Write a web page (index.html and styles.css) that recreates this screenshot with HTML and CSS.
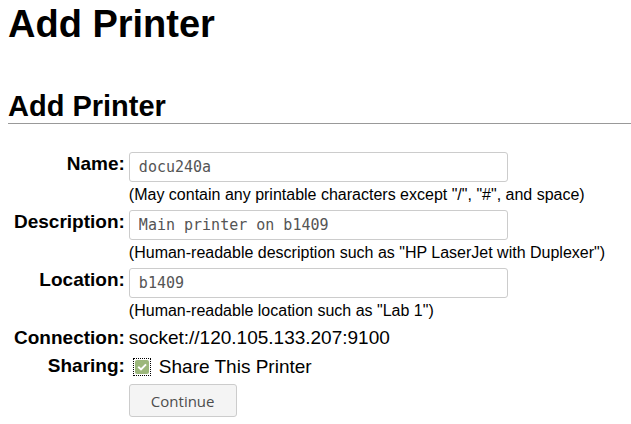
FILE: index.html
```html
<!DOCTYPE html>
<html lang="en">
<head>
<meta charset="utf-8">
<title>Add Printer</title>
<link rel="stylesheet" href="styles.css">
</head>
<body>
<h1 class="page-title">Add Printer</h1>
<h2 class="section-title">Add Printer</h2>
<form class="form">
  <label class="label" for="name">Name:</label>
  <div class="field">
    <input class="input" id="name" type="text" value="docu240a" spellcheck="false">
    <span class="hint">(May contain any printable characters except "/", "#", and space)</span>
  </div>
  <label class="label" for="description">Description:</label>
  <div class="field">
    <input class="input" id="description" type="text" value="Main printer on b1409" spellcheck="false">
    <span class="hint">(Human-readable description such as "HP LaserJet with Duplexer")</span>
  </div>
  <label class="label" for="location">Location:</label>
  <div class="field">
    <input class="input" id="location" type="text" value="b1409" spellcheck="false">
    <span class="hint">(Human-readable location such as "Lab 1")</span>
  </div>
  <span class="label">Connection:</span>
  <span class="value">socket://120.105.133.207:9100</span>
  <span class="label" id="sharing">Sharing:</span>
  <div class="share" role="group" aria-labelledby="sharing">
    <span class="check">
      <input class="checkbox" id="share" type="checkbox" checked>
      <svg class="tick" viewBox="0 0 14 14" aria-hidden="true"><path d="M3.2 6.8 6 9.4l5-5"/></svg>
    </span>
    <label for="share">Share This Printer</label>
  </div>
  <button class="button" type="button">Continue</button>
</form>
</body>
</html>
```
FILE: styles.css
```css
* {
  box-sizing: border-box;
}

body {
  margin: 0 0 0 8px;
  background: #fff;
  color: #000;
  font: 19px/24px "Liberation Sans", Arial, sans-serif;
}

.page-title {
  margin: 0 0 42px;
  font-size: 38px;
  line-height: 48px;
}

.section-title {
  margin: 0 0 28px;
  border-bottom: 1px solid #999;
  font-size: 29px;
  line-height: 33px;
}

.form {
  display: grid;
  grid-template-columns: max-content minmax(0, 1fr);
  gap: 4px;
  padding-left: 6px;
}

.label {
  font-weight: bold;
  text-align: right;
}

.field {
  display: flex;
  flex-direction: column;
}

.input {
  width: 100%;
  max-width: 379px;
  height: 30px;
  padding: 0 9px;
  border: 1px solid #ccc;
  border-radius: 3px;
  background: #fff;
  color: #555;
  font: 15px "DejaVu Sans Mono", monospace;
}

.hint {
  padding-top: 2px;
  font-size: 16px;
  line-height: 22px;
}

.share {
  display: flex;
  align-items: center;
  gap: 8px;
  line-height: 26px;
}

.check {
  position: relative;
  width: 18px;
  height: 18px;
  margin-left: 4px;
  padding: 1px;
  border: 1px dotted #000;
}

.checkbox {
  display: block;
  appearance: none;
  width: 14px;
  height: 14px;
  margin: 0;
  border-radius: 2px;
  background: #9cb77b;
}

.tick {
  position: absolute;
  inset: 1px;
  width: 14px;
  height: 14px;
  fill: none;
  stroke: #fff;
  stroke-width: 2;
  pointer-events: none;
}

.button {
  grid-column: 2;
  justify-self: start;
  height: 33px;
  padding: 0 21px;
  border: 1px solid #ccc;
  border-radius: 3px;
  background: #f4f4f4;
  color: #4d4d4d;
  font: 15px "Open Sans", sans-serif;
}
```
